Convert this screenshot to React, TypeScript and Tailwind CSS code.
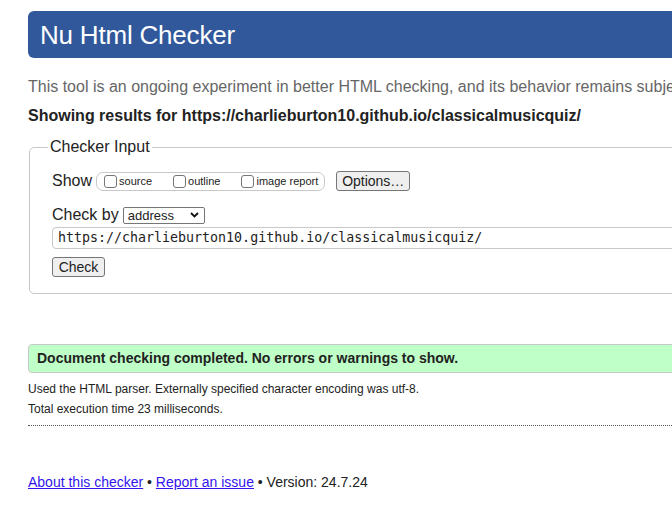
const sans = { fontFamily: '"Liberation Sans", Arial, sans-serif' };

const CheckOpt = ({ label }: { label: string }) => (
  <label className="flex items-center">
    <span className="inline-block w-[13px] h-[13px] border border-[#767676] rounded-[3px] bg-white mr-[2px]" />
    <span className="text-[11px] text-[#222]">{label}</span>
  </label>
);

export default function App() {
  return (
    <div className="w-[672px] h-[532px] overflow-hidden bg-white text-[#222]" style={sans}>
      <div className="w-[900px] ml-[28px] pt-[11px]">
        <header className="h-[47px] bg-[#31589a] rounded-l-[6px] flex items-center pl-[12px]">
          <h1 className="text-white text-[26px] leading-none tracking-[-0.2px]">Nu Html Checker</h1>
        </header>

        <p className="mt-[19px] text-[16px] text-[#666] leading-[20px]">
          This tool is an ongoing experiment in better HTML checking, and its behavior remains subject to change.
        </p>
        <p className="mt-[9px] text-[16px] font-bold leading-[20px]">
          Showing results for https://charlieburton10.github.io/classicalmusicquiz/
        </p>

        <fieldset className="mt-[12px] ml-[1px] border border-[#c8c8c8] rounded-l-[5px] pl-[22px] pb-[16px] pt-0">
          <legend className="px-[2px] ml-[-4px] text-[16px] leading-[18px] text-[#222]">Checker Input</legend>

          <div className="flex items-center h-[20px] mt-[15px]">
            <span className="text-[16px] leading-[20px] mr-[4px]">Show</span>
            <div className="flex items-center gap-[21px] h-[19px] border border-[#c8c8c8] rounded-[7px] pl-[7px] pr-[6px]">
              <CheckOpt label="source" />
              <CheckOpt label="outline" />
              <CheckOpt label="image report" />
            </div>
            <button className="ml-[11px] h-[20px] w-[74px] border border-[#767676] rounded-[3px] bg-[#efefef] text-[14px] leading-none">
              Options…
            </button>
          </div>

          <div className="flex items-center h-[18px] mt-[15px]">
            <span className="text-[16px] leading-[18px] mr-[4px]">Check by</span>
            <div className="w-[82px] h-[17px] border border-[#767676] rounded-[2px] flex items-center justify-between px-[4px]">
              <span className="text-[13px] leading-none">address</span>
              <svg width="9" height="6" viewBox="0 0 9 6" className="mr-[1px]">
                <path d="M1 1l3.5 3.5L8 1" fill="none" stroke="#111" strokeWidth="1.8" />
              </svg>
            </div>
          </div>

          <div className="mt-[3px] h-[22px] border border-[#c8c8c8] rounded-l-[4px] flex items-center pl-[5px]">
            <span className="text-[13.3px] leading-none" style={{ fontFamily: '"DejaVu Sans Mono", monospace' }}>
              https://charlieburton10.github.io/classicalmusicquiz/
            </span>
          </div>

          <button className="block mt-[8px] h-[20px] w-[53px] border border-[#767676] rounded-[3px] bg-[#efefef] text-[14px] leading-none">
            Check
          </button>
        </fieldset>

        <div className="mt-[50px] h-[29px] border border-[#c8c8c8] rounded-l-[4px] bg-[#bfffc8] flex items-center pl-[8px]">
          <span className="text-[14px] font-bold">Document checking completed. No errors or warnings to show.</span>
        </div>

        <p className="mt-[9px] text-[12px] leading-[14px]">Used the HTML parser. Externally specified character encoding was utf-8.</p>
        <p className="mt-[6px] text-[12px] leading-[14px]">Total execution time 23 milliseconds.</p>

        <div className="mt-[9px] border-t border-dotted border-[#555]" />

        <p className="mt-[47px] text-[14px] leading-[18px]">
          <a className="text-[#3314ee] underline">About this checker</a>
          {" • "}
          <a className="text-[#3314ee] underline">Report an issue</a>
          {" • Version: 24.7.24"}
        </p>
      </div>
    </div>
  );
}
